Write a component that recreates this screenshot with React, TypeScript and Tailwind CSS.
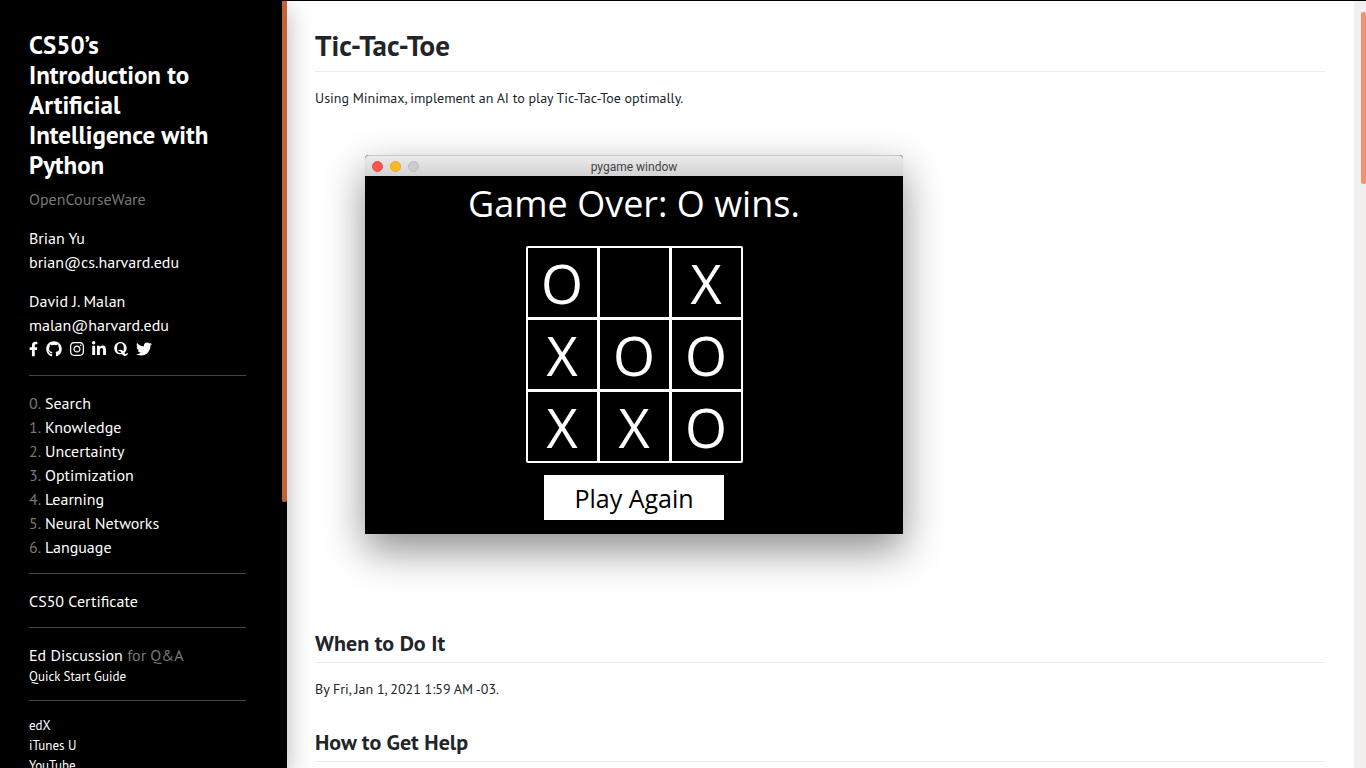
import type { ReactNode } from "react";
import {
  FaFacebookF,
  FaGithub,
  FaInstagram,
  FaLinkedinIn,
  FaQuora,
  FaTwitter,
} from "react-icons/fa";

const socials = [
  { label: "Facebook", icon: <FaFacebookF className="h-4 w-[9px]" /> },
  { label: "GitHub", icon: <FaGithub className="size-4" /> },
  { label: "Instagram", icon: <FaInstagram className="h-4 w-[14px]" /> },
  { label: "LinkedIn", icon: <FaLinkedinIn className="h-4 w-[14px]" /> },
  { label: "Quora", icon: <FaQuora className="h-4 w-[14px]" /> },
  { label: "Twitter", icon: <FaTwitter className="size-4" /> },
];

const weeks = [
  "Search",
  "Knowledge",
  "Uncertainty",
  "Optimization",
  "Learning",
  "Neural Networks",
  "Language",
];

const board = ["O", "", "X", "X", "O", "O", "X", "X", "O"];

function Rule() {
  return <hr className="mb-[15px] mt-[14px] border-[#444444]" />;
}

function Sidebar() {
  return (
    <aside className="z-10 flex w-[287px] shrink-0 overflow-hidden bg-black text-white shadow-[0_8px_24px_rgba(0,0,0,0.3)]">
      <div className="w-[246px] shrink-0 pl-[29px] pt-[29px] text-base leading-6">
        <h1 className="text-[25px] font-bold leading-[30px]">
          <a href="#course">
            CS50’s
            <br />
            Introduction to Artificial Intelligence with Python
          </a>
        </h1>
        <p className="mt-[7px] text-[#777777]">OpenCourseWare</p>
        <p className="mt-[15px]">
          <a href="#brian">Brian Yu</a>
          <br />
          <a href="mailto:brian@cs.harvard.edu">brian@cs.harvard.edu</a>
        </p>
        <p className="mt-[15px]">
          <a href="#david">David J. Malan</a>
          <br />
          <a href="mailto:malan@harvard.edu">malan@harvard.edu</a>
        </p>
        <nav aria-label="Social" className="flex h-6 items-center gap-2">
          {socials.map((s) => (
            <a key={s.label} href={"#" + s.label} aria-label={s.label}>
              {s.icon}
            </a>
          ))}
        </nav>
        <Rule />
        <ol>
          {weeks.map((week, i) => (
            <li key={week}>
              <span className="inline-block w-4 text-[#777777]">{i}.</span>
              <a href={"#week-" + i}>{week}</a>
            </li>
          ))}
        </ol>
        <Rule />
        <a href="#certificate" className="block">
          CS50 Certificate
        </a>
        <Rule />
        <p>
          <a href="#ed">Ed Discussion</a>{" "}
          <span className="text-[#777777]">for Q&amp;A</span>
        </p>
        <a href="#guide" className="mt-px block text-[13px] leading-[18px]">
          Quick Start Guide
        </a>
        <Rule />
        <ul className="text-[13px] leading-5">
          <li>
            <a href="#edx">edX</a>
          </li>
          <li>
            <a href="#itunes">iTunes U</a>
          </li>
          <li>
            <a href="#youtube">YouTube</a>
          </li>
        </ul>
      </div>
      <div className="ml-auto h-[501px] w-[5px] rounded-b-xs bg-[#c1603a]" />
    </aside>
  );
}

function PygameWindow() {
  return (
    <figure className="ml-[50px] mt-[46px] w-[538px] rounded-t-[4px] bg-black shadow-[0_16px_40px_rgba(0,0,0,0.45)]">
      <div className="grid h-[21px] grid-cols-[1fr_auto_1fr] items-center rounded-t-[4px] border-t border-[#c8c8c8] bg-linear-to-b from-[#ebebeb] to-[#d2d2d2] px-[7px]">
        <div className="flex gap-[7px]">
          <span className="size-[11px] rounded-full border border-[#ef4a4a] bg-[#fc5753]" />
          <span className="size-[11px] rounded-full border border-[#eda61c] bg-[#fdb924]" />
          <span className="size-[11px] rounded-full border border-[#bdbdbd] bg-[#cccccc]" />
        </div>
        <figcaption className="pt-0.5 font-[Roboto,sans-serif] text-xs leading-[18px] text-[#444444]">
          pygame window
        </figcaption>
      </div>
      <div className="flex flex-col items-center pb-[14px] font-['Open_Sans',sans-serif] text-white">
        <p className="mt-[3px] text-[36px] leading-[50px]">Game Over: O wins.</p>
        <div className="mt-[17px] grid grid-cols-3 gap-[3px] rounded-xs border-2 border-white bg-white">
          {board.map((mark, i) => (
            <button
              key={i}
              aria-label={"Cell " + (i + 1)}
              className="flex size-[69px] items-center justify-center bg-black pt-0.5 text-[54px] leading-[69px]"
            >
              {mark}
            </button>
          ))}
        </div>
        <button className="mt-3 h-[45px] w-[180px] bg-white pt-0.5 text-[25px] leading-[43px] text-black">
          Play Again
        </button>
      </div>
    </figure>
  );
}

function SectionHeading({ children }: { children: ReactNode }) {
  return (
    <h2 className="border-b border-[#eaecef] pb-1 text-[22px] font-bold leading-[30px]">
      {children}
    </h2>
  );
}

export default function App() {
  return (
    <div className="flex h-screen overflow-hidden border-t border-black bg-white font-['PT_Sans','Noto_Sans_CJK_SC',sans-serif] text-[#212529]">
      <Sidebar />
      <main className="min-w-0 flex-1 overflow-hidden pl-7 pr-[29px] pt-6 text-sm leading-[22px]">
        <h1 className="border-b border-[#eaecef] pb-[6px] text-[29px] font-bold leading-10">
          Tic-Tac-Toe
        </h1>
        <p className="mt-[15px]">
          Using Minimax, implement an AI to play Tic-Tac-Toe optimally.
        </p>
        <PygameWindow />
        <div className="mt-[94px]">
          <SectionHeading>When to Do It</SectionHeading>
          <p className="mb-[27px] mt-[15px]">By Fri, Jan 1, 2021 1:59 AM -03.</p>
          <SectionHeading>How to Get Help</SectionHeading>
        </div>
      </main>
      <div className="w-3 shrink-0 bg-[#f1f0ef] pt-[11px]">
        <div className="ml-auto h-[172px] w-[5px] rounded-xs bg-[#f4926d]" />
      </div>
    </div>
  );
}
